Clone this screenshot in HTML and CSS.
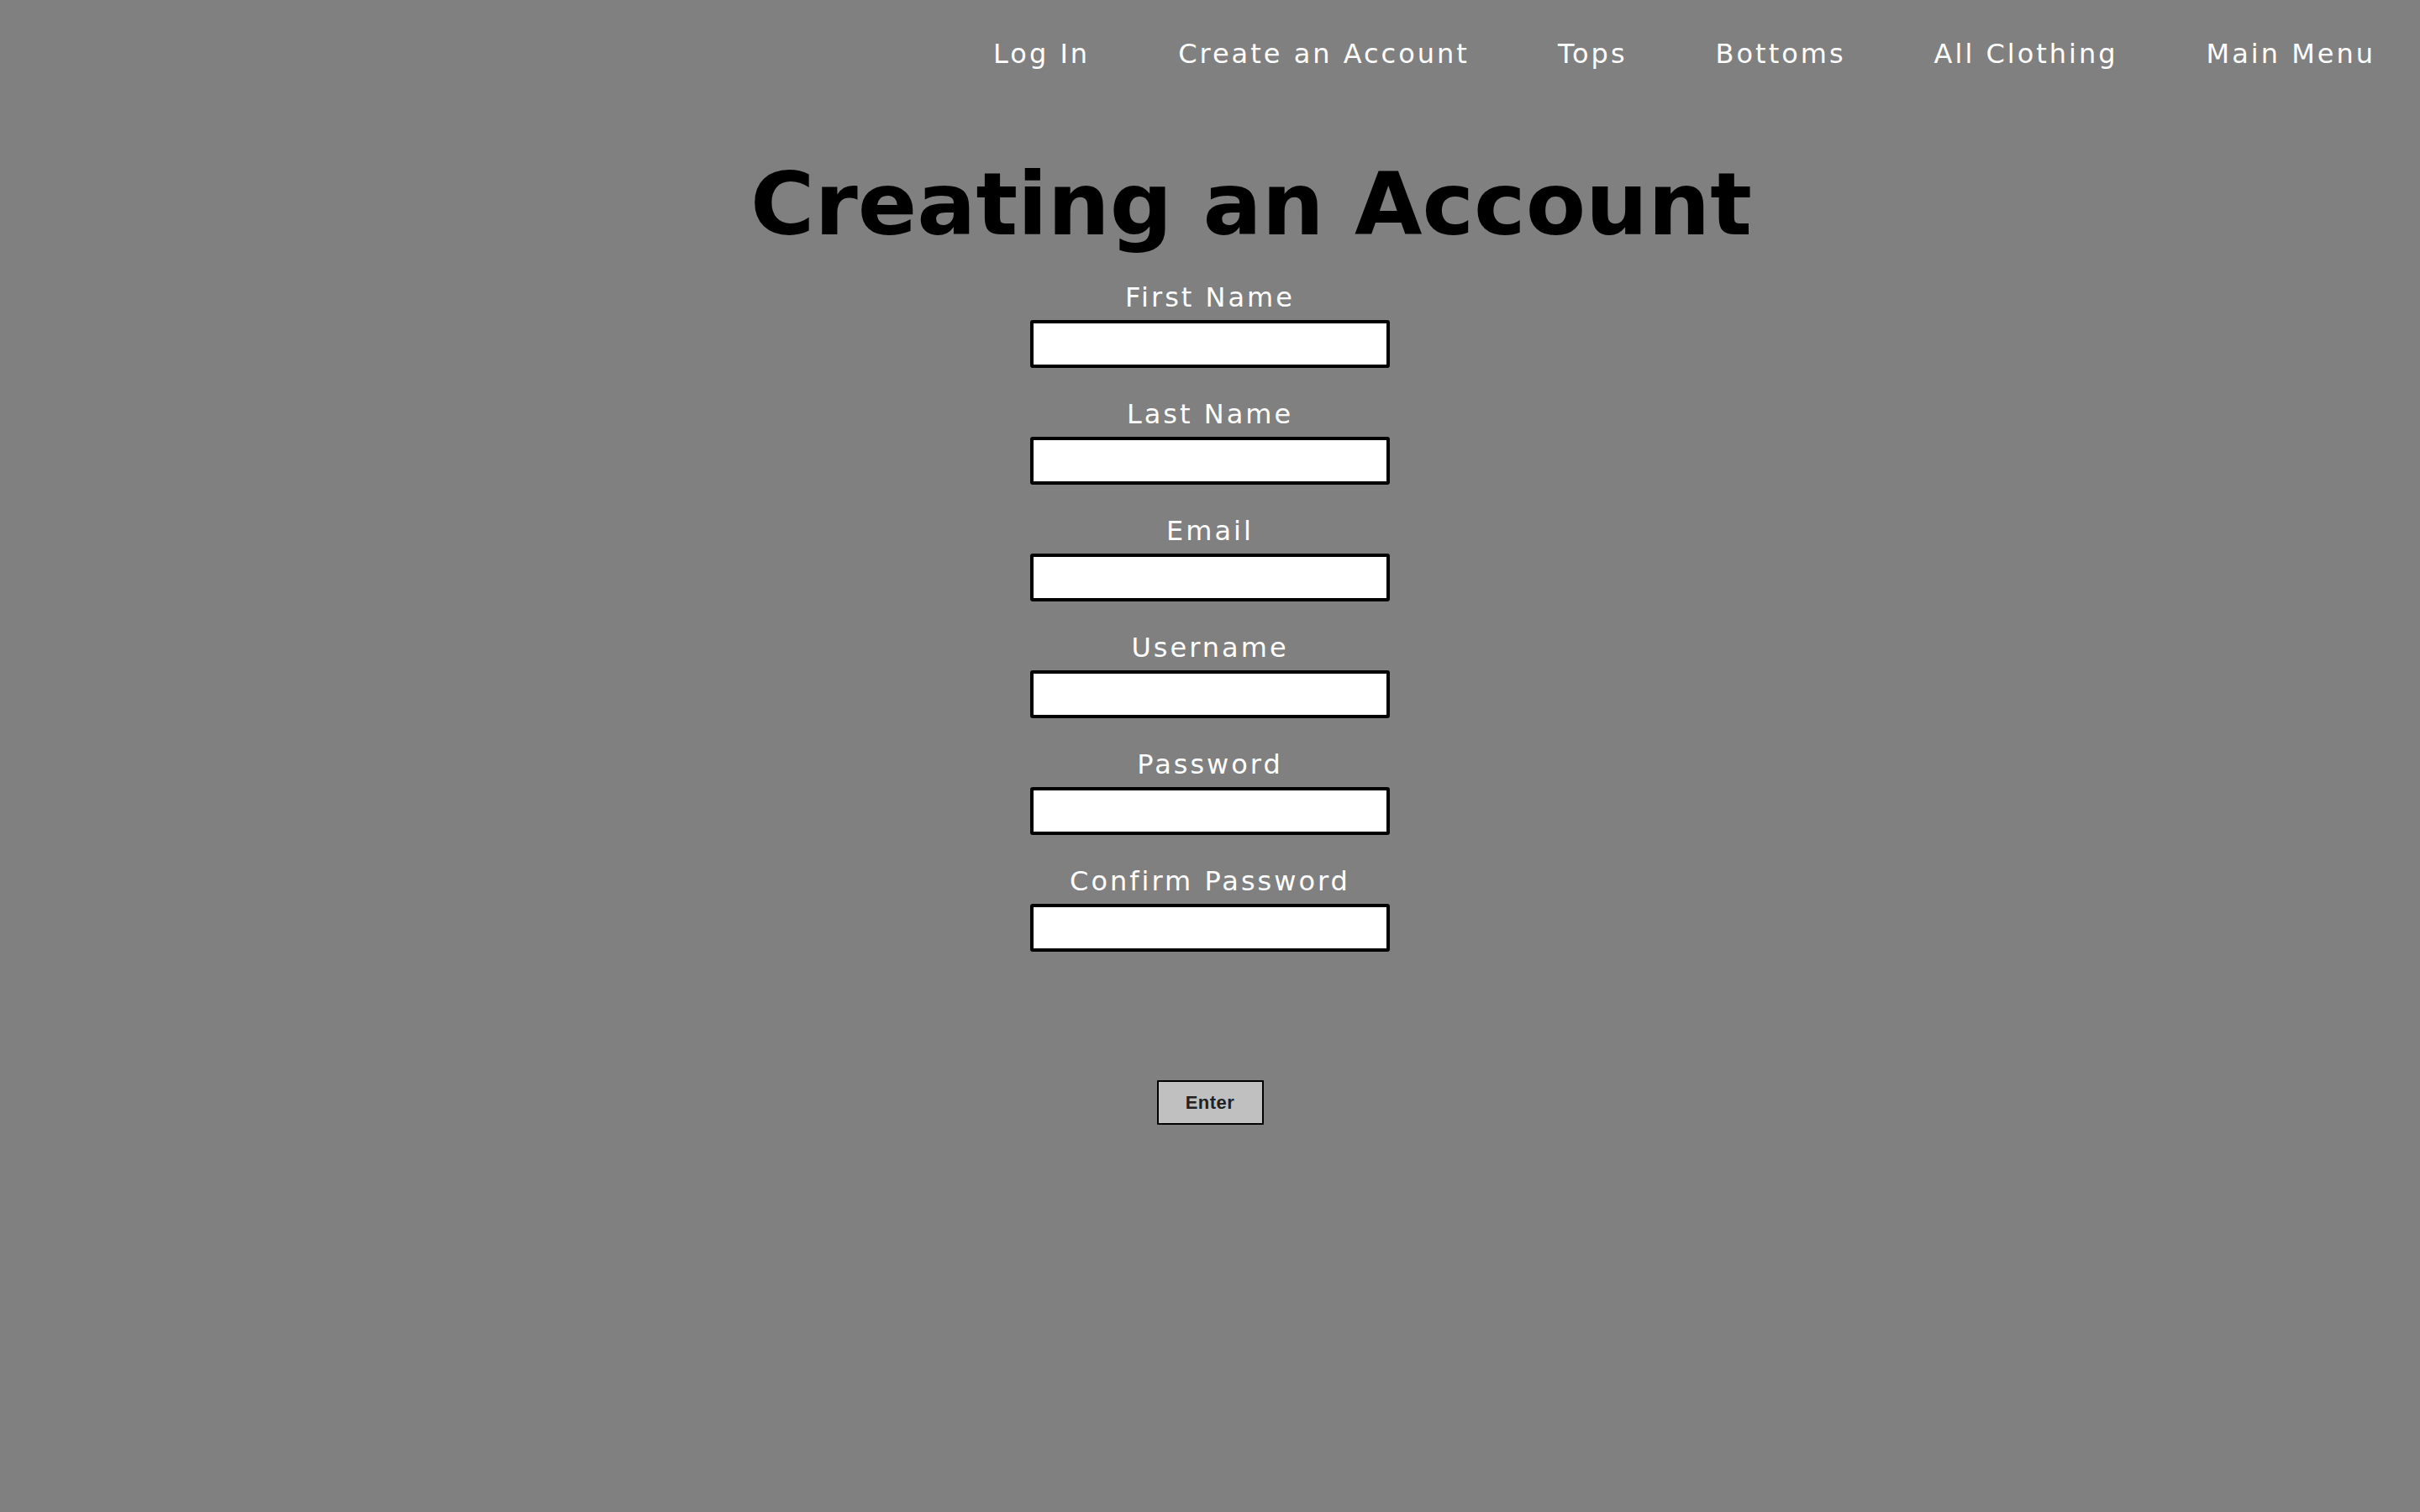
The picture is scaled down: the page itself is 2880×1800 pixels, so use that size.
FILE: index.html
```html
<!DOCTYPE html>
<html lang="en">
<head>
<meta charset="utf-8">
<title>Creating an Account</title>
<link rel="stylesheet" href="styles.css">
</head>
<body>
<header class="topbar">
  <nav class="nav">
    <a class="nav-link" href="#">Log In</a>
    <a class="nav-link" href="#">Create an Account</a>
    <a class="nav-link" href="#">Tops</a>
    <a class="nav-link" href="#">Bottoms</a>
    <a class="nav-link" href="#">All Clothing</a>
    <a class="nav-link" href="#">Main Menu</a>
  </nav>
</header>
<main class="content">
  <h1 class="title">Creating an Account</h1>
  <form class="signup">
    <div class="field">
      <label class="field-label" for="first">First Name</label>
      <input class="field-input" id="first" type="text">
    </div>
    <div class="field">
      <label class="field-label" for="last">Last Name</label>
      <input class="field-input" id="last" type="text">
    </div>
    <div class="field">
      <label class="field-label" for="email">Email</label>
      <input class="field-input" id="email" type="text">
    </div>
    <div class="field">
      <label class="field-label" for="user">Username</label>
      <input class="field-input" id="user" type="text">
    </div>
    <div class="field">
      <label class="field-label" for="pass">Password</label>
      <input class="field-input" id="pass" type="password">
    </div>
    <div class="field">
      <label class="field-label" for="confirm">Confirm Password</label>
      <input class="field-input" id="confirm" type="password">
    </div>
    <button class="enter-btn" type="button">Enter</button>
  </form>
</main>
</body>
</html>
```

FILE: styles.css
```css
html, body {
  margin: 0;
  padding: 0;
}

body {
  background: #808080;
  font-family: "DejaVu Sans", Verdana, sans-serif;
  min-height: 1800px;
}

.topbar {
  padding: 46px 53px 0 0;
}

.nav {
  display: flex;
  justify-content: flex-end;
  gap: 105px;
}

.nav-link {
  color: #ffffff;
  text-decoration: none;
  font-size: 32px;
  line-height: 37px;
  letter-spacing: 3px;
}

.content {
  display: flex;
  flex-direction: column;
  align-items: center;
}

.title {
  align-self: stretch;
  margin: 100px 0 0 0;
  padding-left: 98px;
  text-align: center;
  font-size: 104px;
  line-height: 121px;
  font-weight: bold;
  color: #000000;
}

.signup {
  display: flex;
  flex-direction: column;
  align-items: center;
  gap: 37px;
  margin-top: 32px;
}

.field {
  display: flex;
  flex-direction: column;
  align-items: center;
  gap: 8px;
}

.field-label {
  color: #ffffff;
  font-size: 32px;
  line-height: 37px;
  letter-spacing: 3px;
}

.field-input {
  box-sizing: border-box;
  width: 428px;
  height: 57px;
  border: 4px solid #000000;
  border-radius: 3px;
  background: #ffffff;
  margin: 0;
  padding: 0 8px;
  font-size: 24px;
  outline: none;
}

.enter-btn {
  box-sizing: border-box;
  width: 127px;
  height: 53px;
  margin-top: 116px;
  border: 2px solid #000000;
  border-radius: 1px;
  background: #c0c0c0;
  color: #222222;
  font-family: "Liberation Sans", Arial, sans-serif;
  font-weight: bold;
  font-size: 22px;
  letter-spacing: 0.5px;
  padding: 0;
}
```
